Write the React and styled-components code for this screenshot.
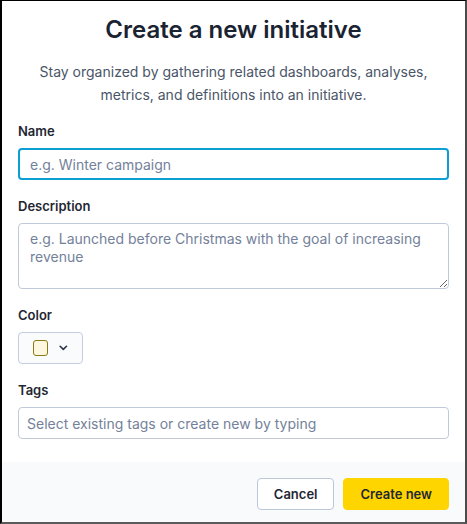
import React from "react";
import styled, { createGlobalStyle } from "styled-components";

const Global = createGlobalStyle`
  html, body {
    margin: 0;
    padding: 0;
    background: #ffffff;
  }
  * {
    box-sizing: border-box;
  }
`;

const Dialog = styled.div`
  width: 467px;
  height: 524px;
  display: flex;
  flex-direction: column;
  background: #ffffff;
  border-top: 1px solid #000000;
  border-left: 2px solid #000000;
  border-right: 2px solid #4a4a4a;
  border-bottom: 2px solid #5a5a5a;
  font-family: Inter, "Liberation Sans", sans-serif;
  color: #1a202c;
  overflow: hidden;
`;

const Body = styled.div`
  flex: 1;
  display: flex;
  flex-direction: column;
  padding: 13px 16px 0;
`;

const Title = styled.h2`
  margin: 0;
  font-size: 24px;
  line-height: 32px;
  font-weight: 600;
  text-align: center;
  color: #1a2332;
`;

const Lead = styled.p`
  margin: 14px 8px 15px;
  font-size: 14px;
  line-height: 23px;
  text-align: center;
  color: #4a5568;
`;

const Field = styled.div`
  display: flex;
  flex-direction: column;
  gap: 7px;
  margin-bottom: 16px;
`;

const Label = styled.label`
  font-size: 13px;
  line-height: 20px;
  font-weight: 600;
  color: #1f2733;
`;

const fieldText = `
  font-family: Inter, "Liberation Sans", sans-serif;
  font-size: 14px;
  color: #1a202c;
  background: #ffffff;
  border-radius: 4px;
  outline: none;
  &::placeholder {
    color: #74819a;
  }
`;

const TextInput = styled.input`
  ${fieldText}
  width: 100%;
  height: 32px;
  padding: 0 ${p => (p.$focused ? 10 : 8)}px;
  border: ${p => (p.$focused ? "2px solid #0b9fd3" : "1px solid #c0cadb")};
`;

const TextArea = styled.textarea`
  ${fieldText}
  width: 100%;
  height: 66px;
  padding: 6px 11px;
  line-height: 18px;
  border: 1px solid #c0cadb;
`;

const ColorButton = styled.button`
  display: flex;
  align-items: center;
  gap: 11px;
  width: 65px;
  height: 32px;
  padding: 0 14px;
  background: #f9fbfd;
  border: 1px solid #c3cde0;
  border-radius: 4px;
  cursor: pointer;
`;

const Swatch = styled.span`
  display: block;
  width: 16px;
  height: 16px;
  border-radius: 3px;
  background: ${p => p.$fill};
  border: 1px solid ${p => p.$stroke};
`;

const Footer = styled.div`
  display: flex;
  justify-content: flex-end;
  gap: 9px;
  padding: 16px 16px 12px;
  background: #f8fafc;
`;

const Button = styled.button`
  height: 32px;
  padding: 0 16px;
  font-family: Inter, "Liberation Sans", sans-serif;
  font-size: 13px;
  font-weight: 600;
  color: #1f2733;
  border-radius: 4px;
  cursor: pointer;
  background: ${p => (p.$primary ? "#ffd500" : "#ffffff")};
  border: 1px solid ${p => (p.$primary ? "#ffd500" : "#bcc7da")};
`;

const Chevron = () => (
  <svg width="9" height="6" viewBox="0 0 9 6" fill="none">
    <path
      d="M1.2 1.2 L4.5 4.5 L7.8 1.2"
      stroke="#2d3748"
      strokeWidth="1.7"
      strokeLinecap="round"
      strokeLinejoin="round"
    />
  </svg>
);

export default function App() {
  return (
    <>
      <Global />
      <Dialog>
        <Body>
          <Title>Create a new initiative</Title>
          <Lead>
            Stay organized by gathering related dashboards, analyses, metrics,
            and definitions into an initiative.
          </Lead>
          <Field>
            <Label>Name</Label>
            <TextInput $focused autoFocus placeholder="e.g. Winter campaign" />
          </Field>
          <Field>
            <Label>Description</Label>
            <TextArea placeholder="e.g. Launched before Christmas with the goal of increasing revenue" />
          </Field>
          <Field>
            <Label>Color</Label>
            <ColorButton>
              <Swatch $fill="#fdf7e0" $stroke="#8c7a12" />
              <Chevron />
            </ColorButton>
          </Field>
          <Field>
            <Label>Tags</Label>
            <TextInput placeholder="Select existing tags or create new by typing" />
          </Field>
        </Body>
        <Footer>
          <Button>Cancel</Button>
          <Button $primary>Create new</Button>
        </Footer>
      </Dialog>
    </>
  );
}
